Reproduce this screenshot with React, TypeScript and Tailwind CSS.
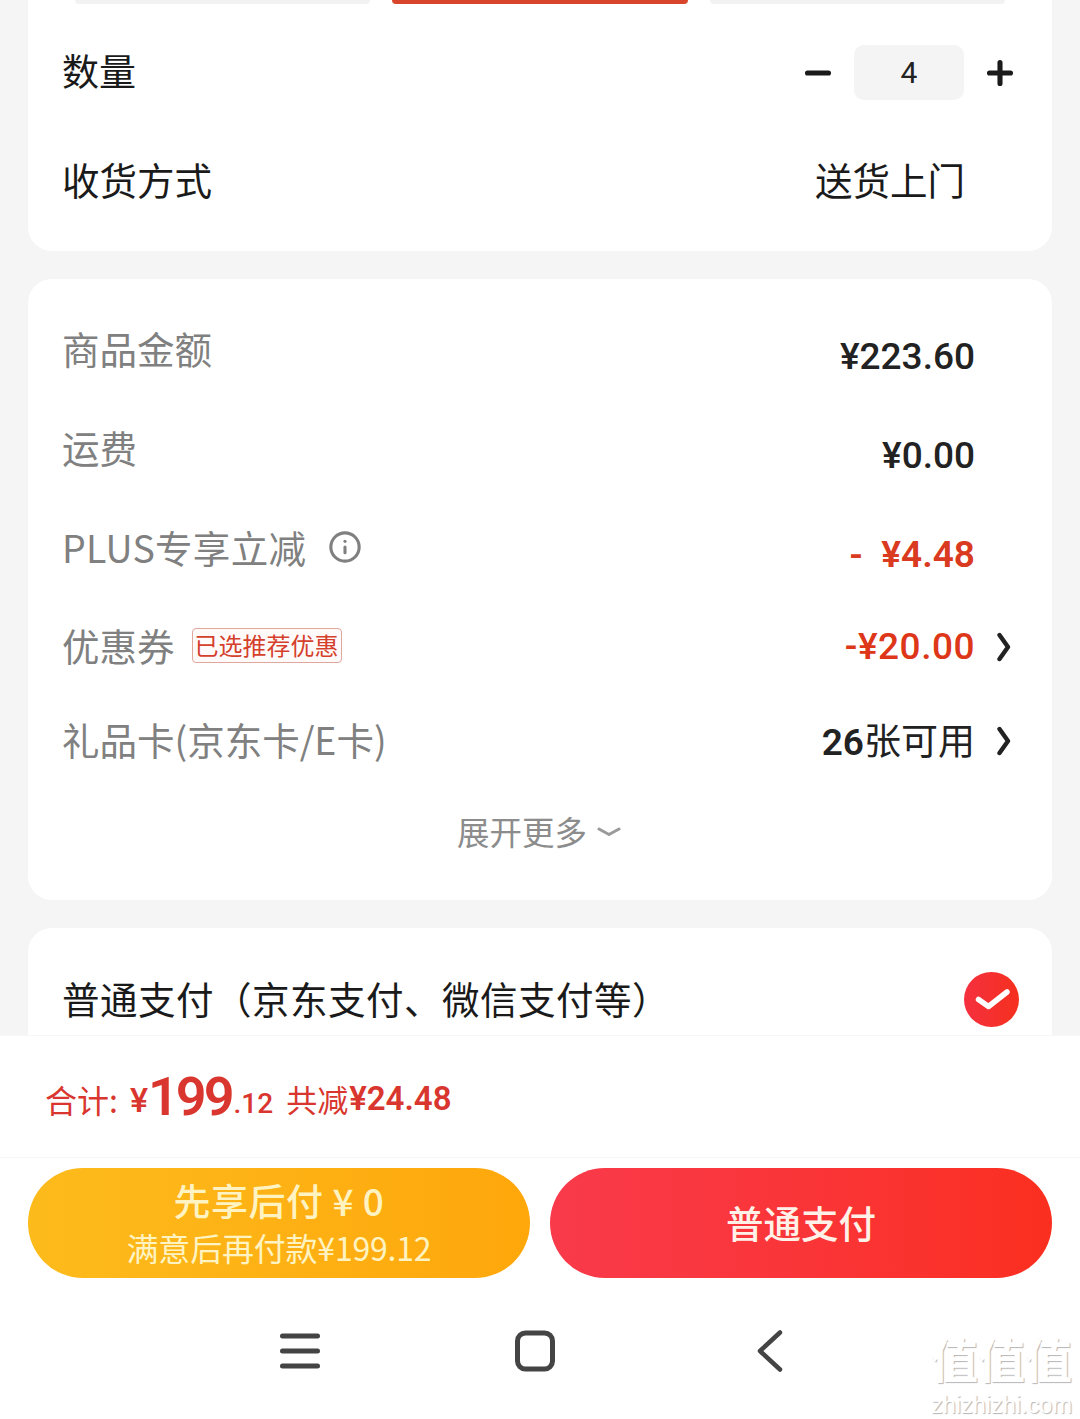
import { Info, Minus, Plus } from 'lucide-react';

const cjk = "font-['Noto_Sans_CJK_SC','Noto_Sans',sans-serif]";
const num = "font-['Roboto','Noto_Sans_CJK_SC',sans-serif]";

function Arrow() {
  return (
    <svg width="16" height="30" viewBox="0 0 16 30" fill="none" stroke="#222222" strokeWidth="4.4" strokeLinecap="round" strokeLinejoin="round" className="ml-[21px]">
      <path d="M3.5 3L12 15L3.5 27" />
    </svg>
  );
}

export default function App() {
  return (
    <div className={`w-[1080px] h-[1419px] flex flex-col overflow-hidden bg-[#f5f5f5] ${cjk}`}>
      <div className="h-[1035px] shrink-0 overflow-hidden px-[28px] flex flex-col gap-[28px]">
        {/* Quantity card */}
        <section className="h-[251px] shrink-0 bg-white rounded-b-[24px] flex flex-col">
          <div className="flex justify-between pl-[47px] pr-[47px] h-[4px]">
            <div className="w-[295px] h-[4px] bg-[#f2f2f2] rounded-b-[12px]" />
            <div className="w-[296px] h-[4px] bg-[#d9442c] rounded-b-[12px]" />
            <div className="w-[295px] h-[4px] bg-[#f2f2f2] rounded-b-[12px]" />
          </div>
          <div className="flex items-center justify-between pl-[34px] pr-[36px] mt-[41px] h-[55px]">
            <span className="text-[37px] leading-[55px] text-[#1a1a1a] -mt-[4px]">数量</span>
            <div className="flex items-center">
              <Minus className="w-[36px] h-[36px] text-[#1a1a1a] mr-[18px]" strokeWidth={3.4} />
              <div className={`w-[110px] h-[55px] rounded-[10px] bg-[#f4f4f4] flex items-center justify-center text-[30px] text-[#222222] ${num}`}>4</div>
              <Plus className="w-[36px] h-[36px] text-[#1a1a1a] ml-[18px] -mr-[2px]" strokeWidth={3.4} />
            </div>
          </div>
          <div className="flex items-center justify-between pl-[34px] pr-[87px] mt-[51px] h-[56px]">
            <span className="text-[37.5px] leading-[56px] text-[#1a1a1a]">收货方式</span>
            <span className="text-[37.5px] leading-[56px] text-[#1a1a1a]">送货上门</span>
          </div>
        </section>

        {/* Price card */}
        <section className="h-[621px] shrink-0 bg-white rounded-[24px] flex flex-col pt-[44px] pl-[34px] pr-[40px]">
          <div className="flex justify-between h-[56px] items-center">
            <span className="text-[37.5px] text-[#808080] -mt-[6px]">商品金额</span>
            <span className={`text-[37px] font-medium text-[#222222] pr-[37px] mt-[12px] ${num}`}>¥223.60</span>
          </div>
          <div className="flex justify-between h-[56px] items-center mt-[43px]">
            <span className="text-[37.5px] text-[#808080] -mt-[6px]">运费</span>
            <span className={`text-[37px] font-medium text-[#222222] pr-[37px] mt-[12px] ${num}`}>¥0.00</span>
          </div>
          <div className="flex justify-between h-[56px] items-center mt-[43px]">
            <span className="flex items-center text-[37.5px] text-[#808080] -mt-[4px] tracking-[0.3px]">
              PLUS专享立减
              <Info className="w-[34px] h-[34px] ml-[22px] text-[#808080]" strokeWidth={2.2} />
            </span>
            <span className={`text-[37px] font-semibold text-[#d93a20] pr-[37px] mt-[12px] whitespace-pre ${num}`}>-  ¥4.48</span>
          </div>
          <div className="flex justify-between h-[56px] items-center mt-[37px]">
            <span className="flex items-center mt-[6px]">
              <span className="text-[37.5px] text-[#808080]">优惠券</span>
              <span className="ml-[17px] w-[150px] h-[35px] border border-[#e0a79d] rounded-[4px] bg-[#fffafa] flex items-center justify-center text-[24px] leading-none text-[#d4402c]">已选推荐优惠</span>
            </span>
            <span className="flex items-center mt-[10px]">
              <span className={`text-[37px] font-medium tracking-[0.5px] text-[#dd3618] ${num}`}>-¥20.00</span>
              <Arrow />
            </span>
          </div>
          <div className="flex justify-between h-[56px] items-center mt-[40px]">
            <span className="text-[37.5px] text-[#808080] mt-[2px]">礼品卡(京东卡/E卡)</span>
            <span className="flex items-center mt-[6px]">
              <span className="text-[37px] text-[#222222]"><span className={`font-semibold ${num}`}>26</span>张可用</span>
              <Arrow />
            </span>
          </div>
          <div className="flex items-center justify-center mt-[42px] h-[46px] text-[32.5px] text-[#8c8c8c] ml-[4px]">
            展开更多
            <svg width="24" height="12" viewBox="0 0 24 12" fill="none" stroke="#9a9a9a" strokeWidth="3" strokeLinecap="round" strokeLinejoin="round" className="ml-[10px] mt-[2px]">
              <path d="M2 3L12 8.5L22 3" />
            </svg>
          </div>
        </section>

        {/* Payment method card */}
        <section className="grow bg-white rounded-t-[24px] flex items-start justify-between pl-[34px] pr-[33px] pt-[44px]">
          <span className="text-[37.5px] leading-[52px] text-[#1a1a1a] tracking-[0.5px]">普通支付（京东支付、微信支付等）</span>
          <svg width="55" height="55" viewBox="0 0 55 55">
            <defs>
              <linearGradient id="checkFill" x1="0" y1="0" x2="1" y2="0">
                <stop offset="0" stopColor="#f5303f" />
                <stop offset="1" stopColor="#f5301e" />
              </linearGradient>
            </defs>
            <circle cx="27.5" cy="27.5" r="27.5" fill="url(#checkFill)" />
            <path d="M14.5 27.5L24.5 34.5L43 20" fill="none" stroke="#ffffff" strokeWidth="5.5" strokeLinecap="round" strokeLinejoin="round" />
          </svg>
        </section>
      </div>

      {/* Total bar */}
      <div className="h-[123px] shrink-0 bg-white border-b border-[#f7f7f7] border-t border-t-[#f7f7f7] flex items-center pl-[45px] pt-[5px] text-[#d8362e]">
        <span className="text-[32px]">合计:</span>
        <span className={`text-[34px] font-medium ml-[12px] mt-[2px] ${num}`}>¥</span>
        <span className={`text-[54px] font-semibold leading-none tracking-[-3px] -mt-[4px] ${num}`}>199</span>
        <span className={`text-[28px] font-medium mt-[10px] ml-[2px] ${num}`}>.12</span>
        <span className="text-[31px] ml-[13px]">共减</span>
        <span className={`text-[33px] font-semibold ml-[1px] ${num}`}>¥24.48</span>
      </div>

      {/* Action buttons */}
      <div className="h-[120px] shrink-0 bg-white px-[28px] pt-[10px] flex gap-[20px]">
        <button className="w-[502px] h-[110px] rounded-full bg-gradient-to-r from-[#fdbb1b] to-[#fea70b] flex flex-col items-center justify-center pb-[2px] text-[#fff3c2]">
          <span className="text-[37px] font-medium leading-[50px] tracking-[0.5px] whitespace-pre">先享后付 ¥ 0</span>
          <span className="text-[32px] leading-[44px] -tracking-[0.2px]">满意后再付款¥199.12</span>
        </button>
        <button className="w-[502px] h-[110px] rounded-full bg-gradient-to-r from-[#f93a4a] to-[#fb2f1f] flex items-center justify-center pb-[2px] text-[37.5px] font-medium text-[#fff1e8]">
          普通支付
        </button>
      </div>

      {/* Android nav bar */}
      <div className="relative grow bg-white flex items-center justify-center pt-[5px] pr-[16px]">
        <div className="w-[504px] flex items-center justify-between">
          <svg width="40" height="40" viewBox="0 0 40 40" fill="none" stroke="#444444" strokeWidth="5" strokeLinecap="round">
            <path d="M2.5 5H37.5M2.5 20H37.5M2.5 35H37.5" />
          </svg>
          <svg width="40" height="42" viewBox="0 0 40 42" fill="none" stroke="#444444" strokeWidth="5" className="mr-[6px]">
            <rect x="2.5" y="3" width="35" height="36" rx="8" />
          </svg>
          <svg width="28" height="42" viewBox="0 0 28 42" fill="none" stroke="#444444" strokeWidth="4.5" strokeLinecap="round" strokeLinejoin="round">
            <path d="M24 2.5L4 21L24 39.5" />
          </svg>
        </div>
        <div className="absolute right-[8px] bottom-[3px] flex flex-col items-center text-white [text-shadow:1px_1px_1px_#b5b5b5]">
          <span className="text-[47px] leading-[47px] font-bold">值值值</span>
          <span className="text-[23.5px] leading-[22px] mt-[13px] font-['Liberation_Sans',sans-serif]">zhizhizhi.com</span>
        </div>
      </div>
    </div>
  );
}
